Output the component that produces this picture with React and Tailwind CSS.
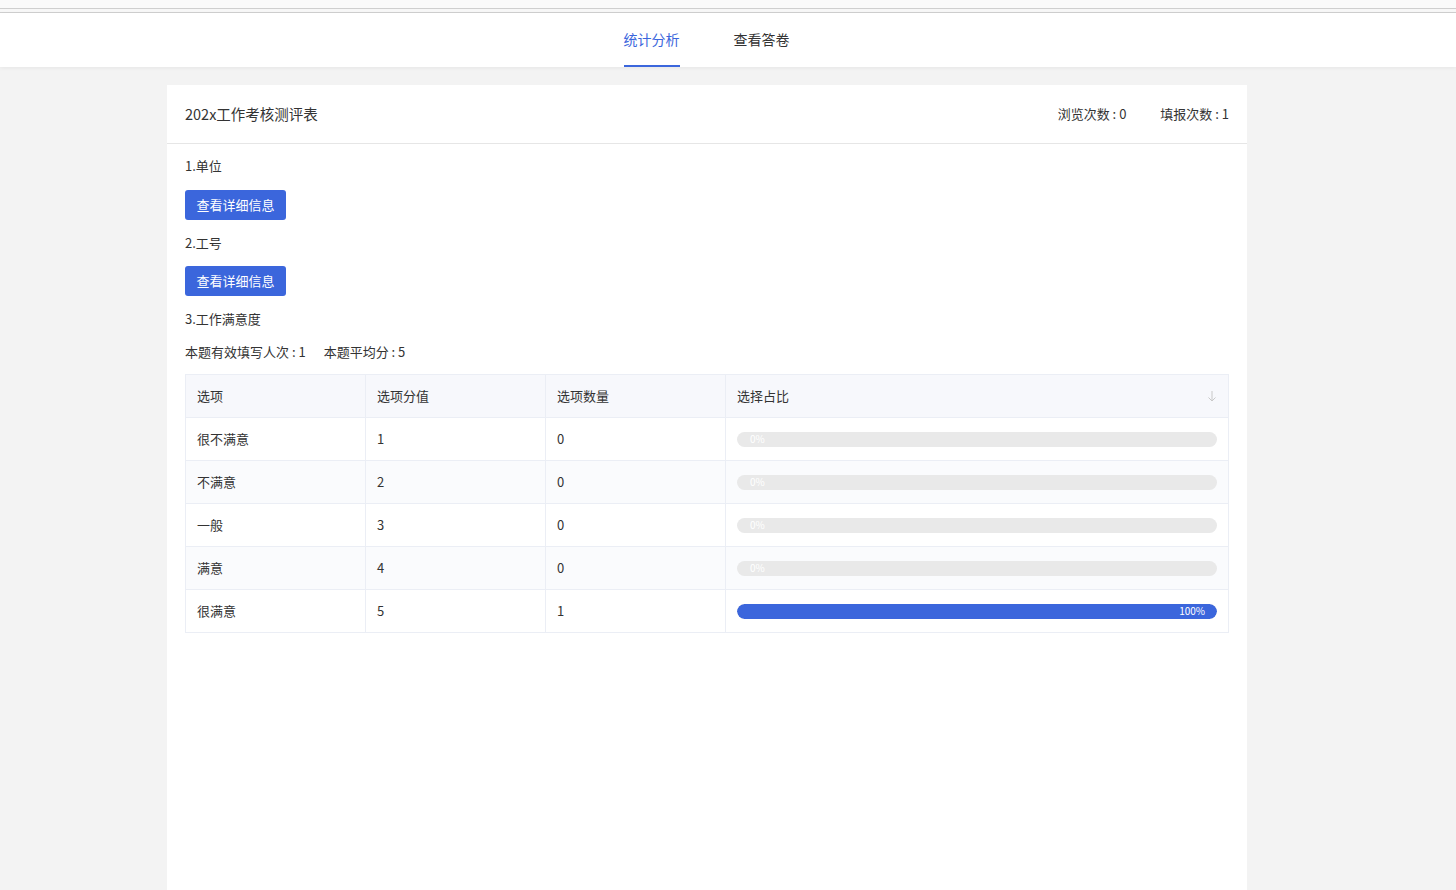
import React from "react";

const rows = [
  { name: "很不满意", score: 1, count: 0, pct: 0 },
  { name: "不满意", score: 2, count: 0, pct: 0 },
  { name: "一般", score: 3, count: 0, pct: 0 },
  { name: "满意", score: 4, count: 0, pct: 0 },
  { name: "很满意", score: 5, count: 1, pct: 100 },
];

function Bar({ pct }) {
  return (
    <div className="relative h-[15px] w-full rounded-full bg-[#e9e9e9] overflow-hidden">
      {pct > 0 ? (
        <div className="h-full rounded-full bg-[#3b66dc] flex items-center justify-end pr-[12px]" style={{ width: pct + "%" }}>
          <span className="text-[10px] leading-none text-white">{pct}%</span>
        </div>
      ) : (
        <span className="absolute left-[13px] top-0 h-full flex items-center text-[10px] leading-none text-white">0%</span>
      )}
    </div>
  );
}

export default function App() {
  return (
    <div className="min-h-[890px] bg-[#f3f3f3] text-[#333] font-['Noto_Sans_CJK_SC','Noto_Sans',sans-serif]">
      <div className="h-[9px] bg-[#fafafa] border-b border-[#cfcfcf]"></div>
      <div className="h-[4px] bg-[#f7f7f7] border-b border-[#d0d0d0]"></div>
      <div className="h-[54px] bg-white shadow-[0_1px_4px_rgba(0,0,0,0.06)] flex justify-center pr-[43px]">
        <div className="flex gap-[54px] h-full">
          <div className="h-full flex items-center text-[14px] text-[#3b66dc] border-b-[2px] border-[#3b66dc]">统计分析</div>
          <div className="h-full flex items-center text-[14px] text-[#333] border-b-[2px] border-transparent">查看答卷</div>
        </div>
      </div>
      <div className="w-[1080px] ml-[167px] mt-[18px] bg-white min-h-[805px]">
        <div className="h-[59px] border-b border-[#e6e6e6] flex items-center justify-between px-[18px]">
          <span className="text-[14.5px]">202x工作考核测评表</span>
          <div className="flex gap-[34px] text-[13px]">
            <span>浏览次数 : 0</span>
            <span>填报次数 : 1</span>
          </div>
        </div>
        <div className="px-[18px] pt-[12px] text-[13px]">
          <div className="h-[20px] leading-[20px]">1.单位</div>
          <button className="mt-[14px] h-[30px] w-[101px] rounded-[3px] bg-[#3b66dc] text-white text-[13px]">查看详细信息</button>
          <div className="mt-[13px] h-[20px] leading-[20px]">2.工号</div>
          <button className="mt-[13px] h-[30px] w-[101px] rounded-[3px] bg-[#3b66dc] text-white text-[13px]">查看详细信息</button>
          <div className="mt-[13px] h-[20px] leading-[20px]">3.工作满意度</div>
          <div className="mt-[13px] h-[20px] leading-[20px] flex gap-[18px]">
            <span>本题有效填写人次 : 1</span>
            <span>本题平均分 : 5</span>
          </div>
          <div className="mt-[12px] border border-[#ebeef5] border-r-0 border-b-0">
            <div className="grid grid-cols-[180px_180px_180px_1fr] h-[43px] bg-[#f7f8fc] border-b border-[#ebeef5]">
              <div className="flex items-center px-[11px] border-r border-[#ebeef5]">选项</div>
              <div className="flex items-center px-[11px] border-r border-[#ebeef5]">选项分值</div>
              <div className="flex items-center px-[11px] border-r border-[#ebeef5]">选项数量</div>
              <div className="flex items-center justify-between px-[11px] border-r border-[#ebeef5]">
                <span>选择占比</span>
                <svg width="10" height="12" viewBox="0 0 10 12" fill="none" stroke="#c8c8c8" strokeWidth="1">
                  <path d="M5 1v10M1.5 7.5 5 11l3.5-3.5" />
                </svg>
              </div>
            </div>
            {rows.map((r, i) => (
              <div key={r.name} className={"grid grid-cols-[180px_180px_180px_1fr] h-[43px] border-b border-[#ebeef5] " + (i % 2 === 1 ? "bg-[#fafbfd]" : "bg-white")}>
                <div className="flex items-center px-[11px] border-r border-[#ebeef5]">{r.name}</div>
                <div className="flex items-center px-[11px] border-r border-[#ebeef5]">{r.score}</div>
                <div className="flex items-center px-[11px] border-r border-[#ebeef5]">{r.count}</div>
                <div className="flex items-center px-[11px] border-r border-[#ebeef5]">
                  <Bar pct={r.pct} />
                </div>
              </div>
            ))}
          </div>
        </div>
      </div>
    </div>
  );
}
